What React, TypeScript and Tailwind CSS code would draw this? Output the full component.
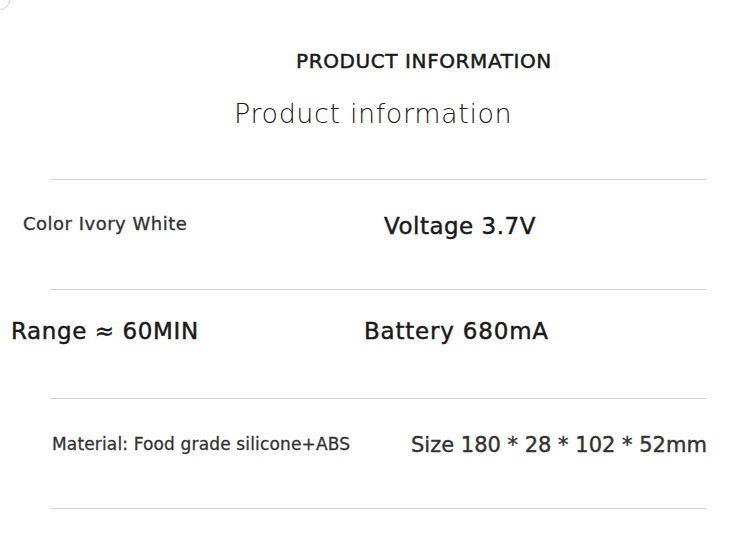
import React from "react";

const dv = { fontFamily: '"DejaVu Sans", "Noto Sans", sans-serif' };

export default function App() {
  return (
    <div className="relative w-[750px] h-[557px] bg-white overflow-hidden" style={dv}>
      <div className="absolute -left-[10px] -top-[10px] w-[20px] h-[20px] rounded-full border border-[#cfcfcf]" />
      <div className="flex flex-col">
        <div className="pt-[47px] pl-[296px] h-[97px]">
          <div className="text-[20px] leading-[28px] font-normal [-webkit-text-stroke:0.5px_#1a1a1a] text-[#1a1a1a] tracking-[0.6px]">PRODUCT INFORMATION</div>
        </div>
        <div className="pl-[234px] h-[82px]">
          <div className="text-[27px] leading-[34px] font-extralight text-[#1a1a1a] tracking-[0.6px]">Product information</div>
        </div>
        <div className="ml-[50px] w-[656px] border-t border-[#d2d2d2]" />
        <div className="flex h-[109px]">
          <div className="w-[375px] pt-[31px] pl-[23px]">
            <span className="text-[18px] leading-[26px] [-webkit-text-stroke:0.35px_#333] text-[#333] tracking-[0.5px]">Color Ivory White</span>
          </div>
          <div className="pt-[31px] pl-[9px]">
            <span className="text-[23px] leading-[30px] [-webkit-text-stroke:0.45px_#1a1a1a] text-[#1a1a1a] tracking-[0.5px]">Voltage 3.7V</span>
          </div>
        </div>
        <div className="ml-[50px] w-[656px] border-t border-[#d2d2d2]" />
        <div className="flex h-[108px]">
          <div className="w-[375px] pt-[26px] pl-[11px]">
            <span className="text-[23px] leading-[30px] [-webkit-text-stroke:0.45px_#1a1a1a] text-[#1a1a1a] tracking-[0.6px]">Range ≈ 60MIN</span>
          </div>
          <div className="pt-[26px] -ml-[11px]">
            <span className="text-[23px] leading-[30px] [-webkit-text-stroke:0.45px_#1a1a1a] text-[#1a1a1a] tracking-[0.8px]">Battery 680mA</span>
          </div>
        </div>
        <div className="ml-[50px] w-[656px] border-t border-[#d2d2d2]" />
        <div className="flex h-[109px]">
          <div className="w-[375px] pt-[33px] pl-[52px]">
            <span className="text-[17px] leading-[24px] [-webkit-text-stroke:0.3px_#333] text-[#333] tracking-[0.15px]">Material: Food grade silicone+ABS</span>
          </div>
          <div className="pt-[32px] pl-[36px]">
            <span className="text-[21px] leading-[28px] [-webkit-text-stroke:0.4px_#333] text-[#333]">Size 180 * 28 * 102 * 52mm</span>
          </div>
        </div>
        <div className="ml-[50px] w-[656px] border-t border-[#d2d2d2]" />
      </div>
    </div>
  );
}
